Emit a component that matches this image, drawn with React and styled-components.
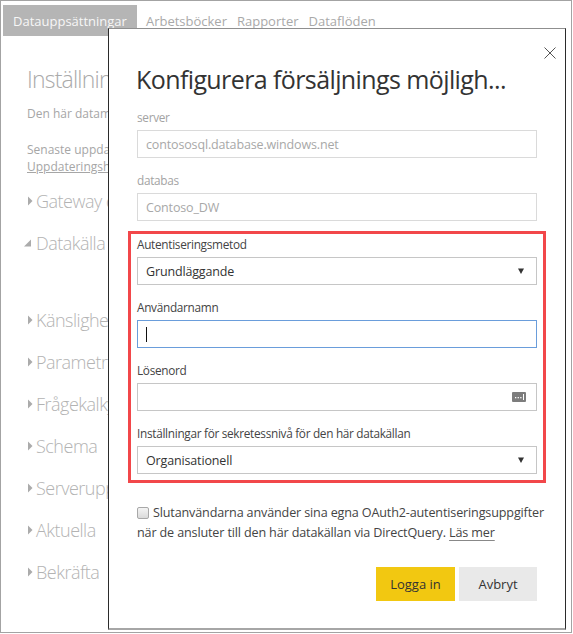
import React from "react";
import styled, { createGlobalStyle } from "styled-components";

const GlobalStyle = createGlobalStyle`
  html, body {
    margin: 0;
    padding: 0;
    background: #fff;
  }
  body {
    font-family: "Open Sans", "Noto Sans", sans-serif;
  }
  * {
    box-sizing: border-box;
  }
`;

const sections = [
  { label: "Gateway connection", open: false },
  { label: "Datakälla autentisering", open: true },
  { label: "Känslighetsetikett", open: false, gap: true },
  { label: "Parametrar", open: false },
  { label: "Frågekalkylering", open: false },
  { label: "Schema", open: false },
  { label: "Serveruppdatering", open: false },
  { label: "Aktuella", open: false },
  { label: "Bekräfta", open: false },
];

const App = () => {
  return (
    <>
      <GlobalStyle />
      <Frame>
        <Tabs>
          <Tab $active>Datauppsättningar</Tab>
          <Tab>Arbetsböcker</Tab>
          <Tab>Rapporter</Tab>
          <Tab>Dataflöden</Tab>
        </Tabs>
        <Panel>
          <PanelTitle>Inställningar för datauppsättningen</PanelTitle>
          <Desc>Den här datamängden har konfigurerats av dig</Desc>
          <Status>
            Senaste uppdateringen lyckades
            <br />
            <u>Uppdateringshistorik</u>
          </Status>
          <Sections>
            {sections.map((s) => (
              <SectionRow key={s.label} $gap={s.gap}>
                <Caret open={s.open} />
                {s.label}
              </SectionRow>
            ))}
          </Sections>
        </Panel>

        <Dialog>
          <Close aria-label="Stäng">
            <svg width="12" height="12" viewBox="0 0 12 12">
              <path d="M0.5 0.5 L11.5 11.5 M11.5 0.5 L0.5 11.5" stroke="#555" strokeWidth="1" fill="none" />
            </svg>
          </Close>
          <Title>Konfigurera försäljnings möjligh...</Title>

          <Fields>
            <Field>
              <Label $disabled>server</Label>
              <Box $variant="disabled">contososql.database.windows.net</Box>
            </Field>
            <Field>
              <Label $disabled>databas</Label>
              <Box $variant="disabled">Contoso_DW</Box>
            </Field>
          </Fields>

          <Highlight>
            <Field>
              <Label>Autentiseringsmetod</Label>
              <Box $variant="select">
                Grundläggande
                <Arrow />
              </Box>
            </Field>
            <Field>
              <Label>Användarnamn</Label>
              <Box $variant="focus">
                <Cursor />
              </Box>
            </Field>
            <Field>
              <Label>Lösenord</Label>
              <Box $variant="select">
                <RevealIcon width="14" height="10" viewBox="0 0 14 10">
                  <rect x="0" y="0" width="14" height="10" rx="1" fill="#7d7d7d" />
                  <rect x="3" y="5" width="1.3" height="1.3" fill="#fff" />
                  <rect x="5.6" y="5" width="1.3" height="1.3" fill="#fff" />
                  <rect x="8.2" y="5" width="1.3" height="1.3" fill="#fff" />
                  <rect x="11" y="2" width="1" height="6" fill="#fff" />
                </RevealIcon>
              </Box>
            </Field>
            <Field>
              <Label>Inställningar för sekretessnivå för den här datakällan</Label>
              <Box $variant="select">
                Organisationell
                <Arrow />
              </Box>
            </Field>
          </Highlight>

          <Consent>
            <Check />
            Slutanvändarna använder sina egna OAuth2-autentiseringsuppgifter
            <br />
            när de ansluter till den här datakällan via DirectQuery.{" "}
            <More>Läs mer</More>
          </Consent>

          <Actions>
            <Button $primary>Logga in</Button>
            <Button>Avbryt</Button>
          </Actions>
        </Dialog>
      </Frame>
    </>
  );
};

const Caret = ({ open }) => (
  <CaretSvg width="13" height="10" viewBox="0 0 13 10">
    {open ? (
      <polygon points="8,1.5 8,8.5 1,8.5" fill="#ababab" />
    ) : (
      <polygon points="5,0.5 9.5,5 5,9.5" fill="#ababab" />
    )}
  </CaretSvg>
);

const Arrow = () => (
  <ArrowSvg width="6" height="6" viewBox="0 0 6 6">
    <polygon points="0,0.5 6,0.5 3,6" fill="#333" />
  </ArrowSvg>
);

const Frame = styled.div`
  position: relative;
  width: 572px;
  height: 633px;
  border: 1px solid #a3a3a3;
  background: #fff;
  overflow: hidden;
`;

const Tabs = styled.div`
  display: flex;
  height: 35px;
  padding: 4px 0 0 2px;
`;

const Tab = styled.div`
  display: flex;
  align-items: center;
  padding: ${(p) => (p.$active ? "0 10px" : "0 5px")};
  margin-right: ${(p) => (p.$active ? "4px" : "0")};
  background: ${(p) => (p.$active ? "#b5b5b5" : "transparent")};
  color: ${(p) => (p.$active ? "#f7f7f7" : "#a9a9a9")};
  font-size: 13px;
  white-space: nowrap;
`;

const Panel = styled.div`
  padding-left: 26px;
  white-space: nowrap;
`;

const PanelTitle = styled.div`
  margin-top: 27px;
  font-size: 23px;
  line-height: 32px;
  font-weight: 300;
  letter-spacing: -0.8px;
  color: #aaaaaa;
`;

const Desc = styled.div`
  margin-top: 10px;
  font-size: 12px;
  line-height: 17px;
  color: #a6a6a6;
`;

const Status = styled.div`
  margin-top: 19px;
  font-size: 12px;
  line-height: 17px;
  color: #a6a6a6;
`;

const Sections = styled.div`
  margin-top: 5px;
  margin-left: -4px;
`;

const SectionRow = styled.div`
  display: flex;
  align-items: center;
  height: 42px;
  margin-top: ${(p) => (p.$gap ? "35px" : "0")};
  font-size: 18px;
  font-weight: 300;
  letter-spacing: -0.5px;
  color: #b3b3b3;
`;

const CaretSvg = styled.svg`
  flex: none;
`;

const Dialog = styled.div`
  position: absolute;
  left: 107px;
  top: 27px;
  width: 458px;
  background: #fff;
  border-left: 1px solid #2b2b2b;
  border-right: 1px solid #2b2b2b;
  border-top: 1px solid #8f8f8f;
  border-bottom: 2px solid #a6a6a6;
  padding: 32px 28px 27px 28px;
`;

const Close = styled.div`
  position: absolute;
  top: 18px;
  right: 9px;
  width: 12px;
  height: 12px;
  display: flex;
`;

const Title = styled.h1`
  margin: 0 0 11px -1px;
  font-size: 25px;
  line-height: 36px;
  font-weight: 400;
  letter-spacing: -0.6px;
  color: #333;
  white-space: nowrap;
`;

const Fields = styled.div`
  display: flex;
  flex-direction: column;
  gap: 13px;
`;

const Highlight = styled.div`
  display: flex;
  flex-direction: column;
  gap: 13px;
  margin: 10px -9px 0;
  border: 3px solid #f2474a;
  padding: 1px 6px 6px;
`;

const Field = styled.div`
  display: flex;
  flex-direction: column;
`;

const Label = styled.div`
  font-size: 11.8px;
  line-height: 19px;
  letter-spacing: -0.3px;
  margin-bottom: 3px;
  color: ${(p) => (p.$disabled ? "#a3a3a3" : "#444")};
  white-space: nowrap;
`;

const boxBorder = {
  disabled: "#dadada",
  select: "#c6c6c6",
  focus: "#6a9ddb",
};

const Box = styled.div`
  position: relative;
  display: flex;
  align-items: center;
  height: 28px;
  padding: 0 8px;
  border: 1px solid ${(p) => boxBorder[p.$variant]};
  background: #fff;
  font-size: 12.5px;
  letter-spacing: -0.15px;
  color: ${(p) => (p.$variant === "disabled" ? "#a8a8a8" : "#333")};
  white-space: nowrap;
`;

const ArrowSvg = styled.svg`
  margin-left: auto;
  margin-right: 4px;
`;

const RevealIcon = styled.svg`
  margin-left: auto;
  margin-right: 2px;
`;

const Cursor = styled.span`
  display: block;
  width: 1px;
  height: 15px;
  background: #111;
`;

const Consent = styled.div`
  margin-top: 20px;
  font-size: 12.6px;
  line-height: 20px;
  letter-spacing: -0.15px;
  color: #444;
  white-space: nowrap;
`;

const Check = styled.span`
  display: inline-block;
  width: 12px;
  height: 12px;
  margin-right: 4px;
  vertical-align: -2px;
  border: 1px solid #a8a8a8;
  border-radius: 2px;
  background: linear-gradient(#f4f4f4, #dadada);
`;

const More = styled.span`
  text-decoration: underline;
  text-decoration-color: #888;
  text-underline-offset: 3px;
`;

const Actions = styled.div`
  display: flex;
  justify-content: flex-end;
  gap: 4px;
  margin-top: 24px;
`;

const Button = styled.button`
  width: ${(p) => (p.$primary ? "79px" : "78px")};
  height: 34px;
  border: none;
  background: ${(p) => (p.$primary ? "#f2c811" : "#e9e9e9")};
  color: #333;
  font-family: inherit;
  font-size: 13px;
  padding: 0;
`;

export default App;
